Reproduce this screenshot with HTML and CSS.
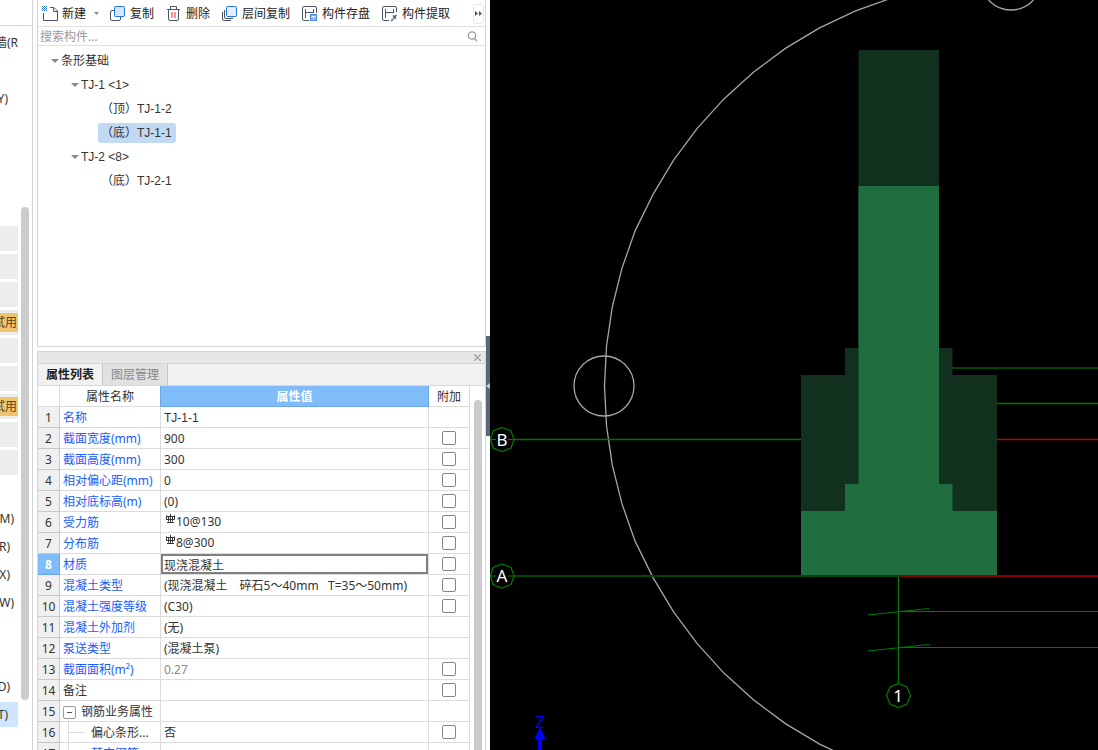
FILE: index.html
```html
<!DOCTYPE html>
<html lang="zh-CN">
<head>
<meta charset="utf-8">
<title>条形基础</title>
<link rel="stylesheet" href="styles.css">
</head>
<body>
<div class="app">
  <nav class="modules" aria-label="模块">
    <div class="modules-head"></div>
    <div class="modules-body">
      <ul class="module-list">
        <li class="module wide">墙(R</li>
        <li class="module"></li>
        <li class="module end-10">Y)</li>
        <li class="module"></li><li class="module"></li><li class="module"></li><li class="module"></li>
        <li class="module tile"></li><li class="module tile"></li><li class="module tile"></li>
        <li class="module tile"><span class="trial">试用</span></li>
        <li class="module tile"></li><li class="module tile"></li>
        <li class="module tile"><span class="trial">试用</span></li>
        <li class="module tile"></li><li class="module tile"></li>
        <li class="module"></li>
        <li class="module end-4">M)</li>
        <li class="module end-8">R)</li>
        <li class="module end-8">X)</li>
        <li class="module end-4">W)</li>
        <li class="module"></li><li class="module"></li>
        <li class="module end-8">D)</li>
        <li class="module current end-10">T)</li>
      </ul>
      <div class="module-scroll"></div>
    </div>
  </nav>

  <main class="dock">
    <section class="components">
      <div class="toolbar">
        <button class="tool new"><svg width="16" height="16" viewBox="0 0 16 16" fill="none"><path d="M8 1.500H12L15.500 5V14.500H1.500V7" stroke="#4c5567"/><path d="M11.500 1.500V5.500H15.500" stroke="#4c5567"/><path d="M0 0h1v1H0zM2 0h1v1H2zM4 0h1v1H4zM1 1h1v1H1zM3 1h1v1H3zM0 2h1v1H0zM2 2h1v1H2zM4 2h1v1H4zM1 3h1v1H1zM3 3h1v1H3zM0 4h1v1H0zM2 4h1v1H2zM4 4h1v1H4z" fill="#2374dc"/></svg>新建</button>
        <button class="drop" aria-label="更多新建"><svg width="5" height="3" viewBox="0 0 5 3"><path d="M0 0H5L2.500 3z" fill="#888"/></svg></button>
        <button class="tool"><svg width="16" height="16" viewBox="0 0 16 16" fill="none"><path d="M4 4.500H2Q.5 4.500 .5 6V13Q.5 14.500 2 14.500H9Q10.500 14.500 10.500 13V11" stroke="#4c5567"/><rect x="4.500" y=".5" width="10" height="10" rx="1" fill="#d5e6fc" stroke="#2374dc"/></svg>复制</button>
        <button class="tool"><svg width="16" height="16" viewBox="0 0 16 16" fill="none"><path d="M1 3.500H14M4.500 3V.5H10.500V3M2.500 4V13Q2.500 14.500 4 14.500H11Q12.500 14.500 12.500 13V4" stroke="#4c5567"/><path d="M6 6V12M9 6V12" stroke="#e02828"/></svg>删除</button>
        <button class="tool"><svg width="16" height="16" viewBox="0 0 16 16" fill="none"><path d="M.5 6V13Q.5 14.500 2 14.500H9M2.500 4V11Q2.500 12.500 4 12.500H11" stroke="#4c5567"/><rect x="4.500" y=".5" width="10" height="10" rx="1" fill="#e3effd" stroke="#2374dc"/></svg>层间复制</button>
        <button class="tool"><svg width="16" height="16" viewBox="0 0 16 16" fill="none"><path d="M7 14.500H2Q.5 14.500 .5 13V2Q.5 .5 2 .5H13Q14.500 .5 14.500 2V7M3.500 12V3M3.500 6.500H11.500M11.500 3V7" stroke="#4c5567"/><rect x="8.500" y="8.500" width="6" height="6" fill="#78a9ef" stroke="#4d8ce5"/><path d="M10 12V10.500H13V12M11.500 14V12.500" stroke="#fff"/></svg>构件存盘</button>
        <button class="tool"><svg width="16" height="16" viewBox="0 0 16 16" fill="none"><path d="M7 14.500H2Q.5 14.500 .5 13V2Q.5 .5 2 .5H13Q14.500 .5 14.500 2V6M3.500 12V3M3.500 6.500H11.500M11.500 3V7" stroke="#4c5567"/><path d="M9 15L12.500 11.500" stroke="#8097b8" stroke-width="2"/><path d="M11 9.500L14 12.500M12.500 11L14.500 9" stroke="#4c5567" stroke-width="1.500"/></svg>构件提取</button>
        <button class="overflow" aria-label="更多"><svg width="7" height="5" viewBox="0 0 7 5"><path d="M0 0L3 2.500L0 5zM4 0L7 2.500L4 5z" fill="#4c5567"/></svg></button>
      </div>
      <div class="search">
        <input type="text" placeholder="搜索构件..." aria-label="搜索构件">
        <svg width="11" height="11" viewBox="0 0 11 11" fill="none" stroke="#999" stroke-width="1.300"><circle cx="5" cy="4.500" r="3.700"/><path d="M7.500 7.500L10 10"/></svg>
      </div>
      <ul class="tree">
        <li><span class="node"><i class="caret"></i>条形基础</span>
          <ul>
            <li><span class="node"><i class="caret"></i>TJ-1 &lt;1&gt;</span>
              <ul>
                <li><span class="leaf">（顶）TJ-1-2</span></li>
                <li><span class="leaf selected">（底）TJ-1-1</span></li>
              </ul>
            </li>
            <li><span class="node"><i class="caret"></i>TJ-2 &lt;8&gt;</span>
              <ul><li><span class="leaf">（底）TJ-2-1</span></li></ul>
            </li>
          </ul>
        </li>
      </ul>
    </section>

    <section class="properties">
      <div class="panel-head"><button class="close" aria-label="关闭"><svg width="7" height="7" viewBox="0 0 7 7"><path d="M0 0L7 7M7 0L0 7" stroke="#999" stroke-width="1.200"/></svg></button></div>
      <div class="tabs">
        <button class="tab active">属性列表</button>
        <button class="tab">图层管理</button>
      </div>
      <div class="sheet-area">
        <table class="sheet">
          <colgroup><col class="c-num"><col class="c-name"><col class="c-value"><col class="c-extra"></colgroup>
          <thead><tr><th></th><th class="before-picked">属性名称</th><th class="picked">属性值</th><th>附加</th></tr></thead>
          <tbody>
            <tr><th>1</th><td class="key">名称</td><td class="code">TJ-1-1</td><td></td></tr>
            <tr><th>2</th><td class="key">截面宽度(mm)</td><td>900</td><td class="pick"><input type="checkbox" aria-label="附加 截面宽度"></td></tr>
            <tr><th>3</th><td class="key">截面高度(mm)</td><td>300</td><td class="pick"><input type="checkbox" aria-label="附加 截面高度"></td></tr>
            <tr><th>4</th><td class="key">相对偏心距(mm)</td><td>0</td><td class="pick"><input type="checkbox" aria-label="附加 相对偏心距"></td></tr>
            <tr><th>5</th><td class="key">相对底标高(m)</td><td>(0)</td><td class="pick"><input type="checkbox" aria-label="附加 相对底标高"></td></tr>
            <tr><th>6</th><td class="key">受力筋</td><td><span class="bar"><svg width="12" height="10" viewBox="0 0 12 10"><path d="M6.500 0V8.500M2.500 1.500V5.500H10.500V1.500M2.500 2.500H10.500M4.500 2.500V7.500M8.500 2.500V7.500M3 8.500H10"/></svg>10@130</span></td><td class="pick"><input type="checkbox" aria-label="附加 受力筋"></td></tr>
            <tr><th>7</th><td class="key">分布筋</td><td><span class="bar"><svg width="12" height="10" viewBox="0 0 12 10"><path d="M6.500 0V8.500M2.500 1.500V5.500H10.500V1.500M2.500 2.500H10.500M4.500 2.500V7.500M8.500 2.500V7.500M3 8.500H10"/></svg>8@300</span></td><td class="pick"><input type="checkbox" aria-label="附加 分布筋"></td></tr>
            <tr><th class="picked">8</th><td class="key">材质</td><td class="editing"><input class="editor" type="text" value="现浇混凝土" aria-label="材质"></td><td class="pick"><input type="checkbox" aria-label="附加 材质"></td></tr>
            <tr><th>9</th><td class="key">混凝土类型</td><td>(现浇混凝土　碎石5～40mm&nbsp;&nbsp;&nbsp;T=35～50mm)</td><td class="pick"><input type="checkbox" aria-label="附加 混凝土类型"></td></tr>
            <tr><th>10</th><td class="key">混凝土强度等级</td><td>(C30)</td><td class="pick"><input type="checkbox" aria-label="附加 混凝土强度等级"></td></tr>
            <tr><th>11</th><td class="key">混凝土外加剂</td><td>(无)</td><td></td></tr>
            <tr><th>12</th><td class="key">泵送类型</td><td>(混凝土泵)</td><td></td></tr>
            <tr><th>13</th><td class="key">截面面积(m²)</td><td class="muted">0.27</td><td class="pick"><input type="checkbox" aria-label="附加 截面面积"></td></tr>
            <tr><th>14</th><td>备注</td><td></td><td class="pick"><input type="checkbox" aria-label="附加 备注"></td></tr>
            <tr><th>15</th><td><span class="group"><button class="fold" aria-label="折叠"></button>钢筋业务属性</span></td><td></td><td></td></tr>
            <tr><th>16</th><td class="child"><span class="branch">偏心条形...</span></td><td>否</td><td class="pick"><input type="checkbox" aria-label="附加 偏心条形"></td></tr>
            <tr><th>17</th><td class="child key"><span class="branch">其它钢筋</span></td><td></td><td></td></tr>
          </tbody>
        </table>
        <div class="sheet-scroll"></div>
      </div>
    </section>
  </main>

  <div class="splitter"><button class="collapse" aria-label="收起"><svg width="4" height="6" viewBox="0 0 4 6"><path d="M4 0V6L0 3z" fill="#c8ccd2"/></svg></button></div>

  <section class="viewport">
    <svg class="scene" viewBox="490 0 608 750" preserveAspectRatio="xMinYMin slice" fill="none">
      <g stroke="#a6a6a6" stroke-width="1.300">
        <polyline points="893.100,-2.500 855.600,10.900 819.600,27.900 785.400,48.400 753.400,72.200 723.900,98.900 697.200,128.400 673.400,160.400 652.900,194.600 635.200,230.600 622,268.100 612.300,306.800 606.500,346.200 604.500,386 606.500,425.800 612.300,465.200 622,503.900 635.200,541.400 652.900,577.400 673.400,611.600 697.200,643.600 723.900,673.100 753.400,699.800 785.400,723.600 819.600,744.100 855.600,761.100"/>
        <circle cx="604" cy="386" r="30"/>
        <circle cx="1011" cy="-20" r="30"/>
      </g>
      <path d="M514 439.500H801M997 403.500H1098" stroke="#007800" stroke-width="1.300"/>
      <path d="M952 368H1098" stroke="#004800" stroke-width="2"/>
      <path d="M997 439.500H1098" stroke="#c40000" stroke-width="1.300"/>
      <path d="M858.500 50H939V348H952.500V375H997V512H801V375H845V348H858.500z" fill="#11301e"/>
      <path d="M858.500 186H939V484H952.500V511H997V576H801V511H845V484H858.500z" fill="#206e3f"/>
      <path d="M514 576H899" stroke="#004800" stroke-width="2"/>
      <path d="M899 576H1098" stroke="#850000" stroke-width="2"/>
      <g stroke="#007c00" stroke-width="1.200">
        <path d="M898.500 577V683M899 611.500H1098M899 647.500H1098M868 615L929 608.500M868 651L929 644.500"/>
        <path d="M898.500 683.500L907 687L910.500 695.500L907 704L898.500 707.500L890 704L886.500 695.500L890 687z"/>
        <path d="M502 427.500L511 431L514 439.500L511 448L502 451.500L493 448L490.500 439.500L493 431z"/>
        <path d="M502 564L511 567.500L514 576L511 584.500L502 588L493 584.500L490.500 576L493 567.500z"/>
        <path d="M490 439.500H496M508 439.500H514M490 576H496M508 576H514"/>
      </g>
      <g class="axis-label">
        <text x="502" y="446">B</text><text x="502" y="582">A</text><text x="898" y="702">1</text>
      </g>
      <text class="z-label" x="540" y="728">Z</text>
      <path d="M540 727L545.500 739H542V750H538V739H534.500z" fill="#0000ff"/>
    </svg>
  </section>
</div>
</body>
</html>
```
FILE: styles.css
```css
* { box-sizing: border-box; }
body {
  margin: 0;
  background: #fff;
  color: #333;
  font: 12px/20px "Noto Sans", "Noto Sans CJK SC", sans-serif;
}
button, input { font: inherit; color: inherit; margin: 0; }
button { border: 0; padding: 0; background: none; cursor: pointer; }
ul { list-style: none; margin: 0; padding: 0; }
svg { display: block; flex: none; }

.app {
  display: grid;
  grid-template-columns: 33px 453px 4px minmax(0, 1fr);
  grid-template-rows: 100vh;
  overflow: hidden;
}

/* module strip */
.modules { border-right: 1px solid #d4d4d4; overflow: hidden; }
.modules-head { height: 26px; border-bottom: 1px solid #d4d4d4; }
.modules-body { display: flex; gap: 3px; padding-top: 3px; }
.module-list { width: 18px; }
.module {
  height: 28px;
  display: flex;
  align-items: center;
  justify-content: flex-end;
  overflow: hidden;
  white-space: nowrap;
  border: solid #fff;
  border-width: 1px 0 2px;
}
.module.tile { background: #ececec; }
.module.current { background: #d0e5ff; }
.end-4 { padding-right: 4px; }
.end-8 { padding-right: 8px; }
.end-10 { padding-right: 10px; }
.trial { background: #efc470; color: #5c4318; line-height: 18px; padding: 1px 1px 0 0; }
.module-scroll { width: 8px; height: 493px; margin-top: 178px; border-radius: 4px; background: #ccc; }

/* dock */
.dock {
  display: grid;
  grid-template-rows: minmax(0, 347fr) minmax(0, 399fr);
  row-gap: 4px;
  margin-left: 4px;
}
.components { border: solid #d4d4d4; border-width: 0 1px 1px; overflow: hidden; }
.toolbar {
  display: flex;
  align-items: center;
  gap: 12px;
  height: 27px;
  padding: 1px 1px 0 4px;
  border-bottom: 1px solid #e0e0e0;
}
.tool { display: flex; align-items: center; gap: 4px; white-space: nowrap; color: #222; }
.tool.new { margin-right: -4px; }
.drop { margin-right: -1px; }
.overflow {
  display: flex;
  align-items: center;
  justify-content: center;
  width: 11px;
  height: 20px;
  margin-left: auto;
  border: 1px solid #e8e8e8;
  border-radius: 3px;
}
.search { display: flex; align-items: center; height: 19px; padding: 1px 7px 0 2px; border-bottom: 1px solid #e0e0e0; }
.search input { flex: 1; min-width: 0; height: 17px; border: 0; padding: 1px 0 0; outline: 0; background: none; }
.search input::placeholder { color: #999; }

.tree { padding: 3px 0 0 13px; line-height: 24px; font-family: "Liberation Sans", "Noto Sans CJK SC", sans-serif; }
.tree ul { padding-left: 20px; }
.node { display: flex; align-items: center; gap: 2px; }
.caret { border: solid transparent; border-width: 4px 4px 0; border-top-color: #888; width: 8px; }
.leaf { display: inline-block; height: 20px; line-height: 20px; margin: 2px 0 2px 7px; padding: 0 4px 0 3px; border-radius: 3px; vertical-align: top; }
.leaf.selected { background: #c2d9f2; }

/* property panel */
.properties { display: flex; flex-direction: column; border: solid #d4d4d4; border-width: 1px 1px 0; overflow: hidden; }
.panel-head { display: flex; justify-content: flex-end; align-items: center; height: 12px; padding-right: 4px; flex: none; background: #e7e7e7; border-bottom: 1px solid #d4d4d4; }
.tabs { display: flex; flex: none; height: 22px; background: #f1f1f1; border-bottom: 1px solid #d8d8d8; }
.tab { width: 65px; height: 21px; background: #e1e1e1; color: #888; border: solid #c6c6c6; border-width: 0 1px 0 0; }
.tab.active { background: #f1f1f1; color: #222; font-weight: bold; }
.sheet-area { display: flex; flex: 1; min-height: 0; gap: 4px; }
.sheet { flex: 1; min-width: 0; table-layout: fixed; border-collapse: separate; border-spacing: 0; }
.c-num { width: 22px; }
.c-name { width: 101px; }
.c-extra { width: 41px; }
.sheet th, .sheet td {
  height: 21px;
  padding: 2px 0 0 3px;
  border: solid #dcdcdc;
  border-width: 0 1px 1px 0;
  line-height: 18px;
  font-weight: normal;
  text-align: left;
  white-space: nowrap;
  overflow: hidden;
}
.sheet thead th { padding: 2px 0 0; text-align: center; }
.sheet thead .before-picked { border-right-color: #68a6e6; }
.sheet tbody th { padding: 2px 0 0; background: #f0f0f0; border-color: #c8c8c8; text-align: center; }
.sheet .picked, .sheet tbody .picked { background: #80bbfa; border-color: #68a6e6; color: #fff; font-weight: bold; }
.sheet .key { color: #1a5cff; }
.sheet .muted { color: #888; }
.sheet .code { font-family: "Liberation Sans", sans-serif; }
.sheet .pick { padding: 0; }
.pick input {
  display: block;
  appearance: none;
  width: 14px;
  height: 14px;
  margin: 0 auto;
  border: 1px solid #858585;
  border-radius: 2px;
  background: #fff;
}
.sheet .editing { padding: 0; }
.editor { display: block; width: 100%; height: 20px; padding: 1px 0 0 1px; border: 2px solid #808080; outline: 0; }
.bar { display: flex; align-items: flex-start; height: 18px; line-height: 16px; }
.bar path { stroke: #333; fill: none; }
.group { display: flex; align-items: center; gap: 5px; }
.fold {
  width: 13px;
  height: 13px;
  border: 1px solid #999;
  border-radius: 2px;
  background: linear-gradient(#555, #555) center / 5px 1px no-repeat;
}
.sheet td.child { padding: 0 0 0 8px; }
.branch { display: flex; align-items: center; gap: 6px; height: 20px; padding-top: 1px; border-left: 1px solid #ddd; }
.branch::before { content: ""; width: 16px; border-top: 1px solid #ddd; }
.sheet-scroll { width: 8px; margin: 14px 3px 0 0; border-radius: 4px 4px 0 0; background: #ccc; }

/* splitter and 3D view */
.splitter { padding-top: 336px; }
.collapse { display: flex; align-items: center; width: 4px; height: 100px; background: #5c6675; }
.viewport { background: #000; overflow: hidden; }
.scene { width: 100%; height: 100%; }
.axis-label { font-size: 17px; fill: #fff; text-anchor: middle; }
.z-label { font-size: 17px; fill: #0000ff; text-anchor: middle; }
```
